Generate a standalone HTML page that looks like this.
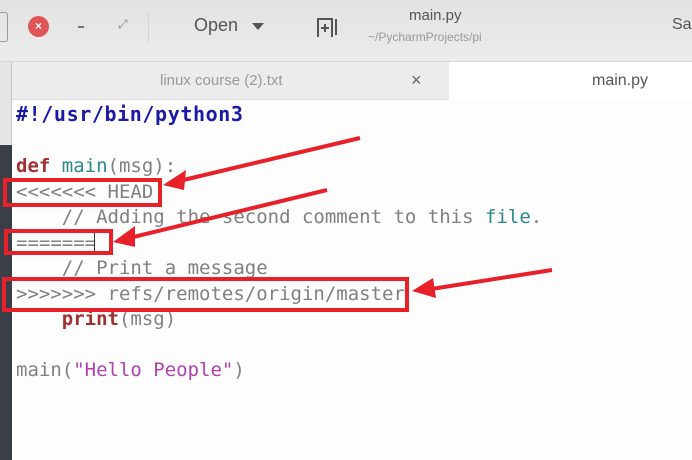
<!DOCTYPE html>
<html><head><meta charset="utf-8"><style>
*{margin:0;padding:0;box-sizing:border-box}
body{width:692px;height:460px;overflow:hidden;background:#fff;position:relative;font-family:"Liberation Sans",sans-serif}
.top{position:absolute;left:0;top:0;width:692px;height:62px;background:linear-gradient(#e2e2e2,#ececec);border-bottom:1px solid #d6d6d6}
.tabs{position:absolute;left:12px;top:62px;width:680px;height:38px;background:#ececec;border-bottom:1px solid #ddd}
.left{position:absolute;left:0;top:0;width:12px;height:460px;background:#3a3f47}
.left .l1{position:absolute;left:0;top:0;width:12px;height:145px;background:#e6e6e6;border-right:1px solid #c8c8c8}
.ed{position:absolute;left:12px;top:100px;width:680px;height:360px;background:#fdfdfd}
.code{position:absolute;left:16px;font-family:"DejaVu Sans Mono","Liberation Mono",monospace;font-size:19px;color:#808080;white-space:pre;line-height:25.5px}
.t{position:absolute;white-space:nowrap}
</style></head><body>
<div class="left"><div class="l1"></div></div>
<div class="top"></div>
<div class="t" style="left:0;top:12px;width:8px;height:30px;border:1px solid #999;border-left:none;border-radius:0 3px 3px 0"></div>
<div class="t" style="left:28px;top:16px;width:21px;height:21px;border-radius:50%;background:#e05555;color:#fff;font-size:12px;font-weight:bold;text-align:center;line-height:21px">×</div>
<div class="t" style="left:78px;top:26px;width:6px;height:2px;background:#777"></div>
<div class="t" style="left:118px;top:17px;color:#888;font-size:12px">⤢</div>
<div class="t" style="left:148px;top:12px;width:1px;height:30px;background:#d4d4d4"></div>
<div class="t" style="left:194px;top:15px;color:#555;font-size:18px">Open</div>
<div class="t" style="left:252px;top:23px;width:0;height:0;border-left:6px solid transparent;border-right:6px solid transparent;border-top:7px solid #555"></div>
<svg class="t" style="left:316px;top:17px" width="22" height="20"><path d="M2 20V2h14v18M20 2v16" stroke="#555" stroke-width="2" fill="none"/><path d="M9 7v8M5 11h8" stroke="#555" stroke-width="2"/></svg>
<div class="t" style="left:409px;top:7px;color:#555;font-size:15px">main.py</div>
<div class="t" style="left:368px;top:30px;color:#999;font-size:12px">~/PycharmProjects/pi</div>
<div class="t" style="left:672px;top:16px;color:#555;font-size:16px">Sa</div>
<div class="tabs"></div>
<div class="t" style="left:449px;top:62px;width:243px;height:38px;background:#fff"></div>
<div class="t" style="left:160px;top:72px;color:#999;font-size:15px">linux course (2).txt</div>
<div class="t" style="left:411px;top:70px;color:#666;font-size:18px">×</div>
<div class="t" style="left:592px;top:72px;color:#555;font-size:16px">main.py</div>
<div class="ed"></div>
<div class="code" style="top:102px;font-size:20px;font-weight:bold;color:#1a1aa6;letter-spacing:0.6px">#!/usr/bin/python3</div>
<div class="code" style="top:154px"><b style="color:#a33030">def</b> <span style="color:#2a8a8a">main</span>(msg):
&lt;&lt;&lt;&lt;&lt;&lt;&lt; HEAD
    // Adding the second comment to this <span style="color:#2a8a8a">file</span>.
=======
    // Print a message
&gt;&gt;&gt;&gt;&gt;&gt;&gt; refs/remotes/origin/master
    <b style="color:#a33030">print</b>(msg)

main(<span style="color:#b23fb2">"Hello People"</span>)</div>
<div class="t" style="left:94px;top:232px;width:1px;height:20px;background:#333"></div>
<svg class="t" style="left:0;top:0" width="692" height="460">
<g stroke="#e8202a" stroke-width="4" fill="none">
<rect x="5" y="180" width="155" height="25"/>
<rect x="6" y="231" width="105" height="22"/>
<rect x="4" y="279" width="403" height="31"/>
<path d="M360 138L175 182M327 190L125 239M552 270L425 290"/>
</g>
<g fill="#e8202a">
<path d="M163 185L186 170L184 190Z"/>
<path d="M113 242L135 226L135 247Z"/>
<path d="M412 291L433 278L436 298Z"/>
</g>
</svg>
</body></html>
